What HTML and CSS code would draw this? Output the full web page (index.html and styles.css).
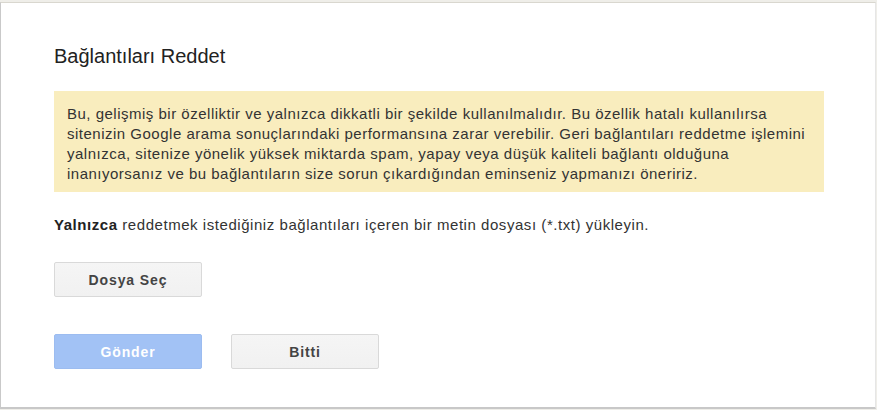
FILE: index.html
```html
<!DOCTYPE html>
<html lang="tr">
<head>
  <meta charset="UTF-8" />
  <title>Bağlantıları Reddet</title>
  <link rel="stylesheet" href="styles.css" />
</head>
<body>

  <!-- 拒否ダイアログ -->
  <div class="dialog">
    <h1 class="dialog-title">Bağlantıları Reddet</h1>

    <div class="warning">
      Bu, gelişmiş bir özelliktir ve yalnızca dikkatli bir şekilde kullanılmalıdır. Bu özellik hatalı kullanılırsa<br>
      sitenizin Google arama sonuçlarındaki performansına zarar verebilir. Geri bağlantıları reddetme işlemini<br>
      yalnızca, sitenize yönelik yüksek miktarda spam, yapay veya düşük kaliteli bağlantı olduğuna<br>
      inanıyorsanız ve bu bağlantıların size sorun çıkardığından eminseniz yapmanızı öneririz.
    </div>

    <p class="hint"><b>Yalnızca</b> reddetmek istediğiniz bağlantıları içeren bir metin dosyası (*.txt) yükleyin.</p>

    <div class="row">
      <button class="btn">Dosya Seç</button>
    </div>

    <div class="row actions">
      <button class="btn btn-blue" disabled>Gönder</button>
      <button class="btn">Bitti</button>
    </div>
  </div>

</body>
</html>
```

FILE: styles.css
```css
/* 基本設定 */
body {
  margin: 0;
  background-color: #efeee9;
  font-family: Arial, "Liberation Sans", sans-serif;
  color: #222;
  height: 410px;
  overflow: hidden;
}

/* ダイアログ */
.dialog {
  margin-top: 2px;
  margin-right: 1px;
  height: 407px;
  box-sizing: border-box;
  background-color: #fff;
  border-top: 1px solid #d9d7cf;
  border-left: 1px solid #c9c9c9;
  border-right: 1px solid #e6e6e6;
  border-bottom: 2px solid #c8c8c8;
  padding: 0 0 0 53px;
}

.dialog-title {
  font-size: 20px;
  font-weight: normal;
  line-height: 24px;
  margin: 41px 0 23px;
  color: #222;
}

/* 注意ボックス */
.warning {
  width: 744px;
  background-color: #f9edbe;
  font-size: 15px;
  letter-spacing: 0.5px;
  line-height: 20px;
  color: #333;
  padding: 13px 13px 8px;
  white-space: nowrap;
}

.hint {
  font-size: 15px;
  letter-spacing: 0.55px;
  line-height: 20px;
  color: #333;
  margin: 23px 0 0;
}

.hint b {
  color: #222;
}

/* ボタン */
.row {
  display: flex;
  gap: 29px;
  margin-top: 27px;
}

.actions {
  margin-top: 37px;
}

.btn {
  width: 148px;
  height: 35px;
  border: 1px solid #d9d9d9;
  border-radius: 2px;
  background: linear-gradient(#f5f5f5, #f1f1f1);
  font-family: Arial, "Liberation Sans", sans-serif;
  font-size: 14px;
  letter-spacing: 0.9px;
  font-weight: bold;
  color: #444;
  padding: 0;
}

.btn-blue {
  background: #a2c2f5;
  border-color: #9cbcf0;
  color: #fff;
}
```
